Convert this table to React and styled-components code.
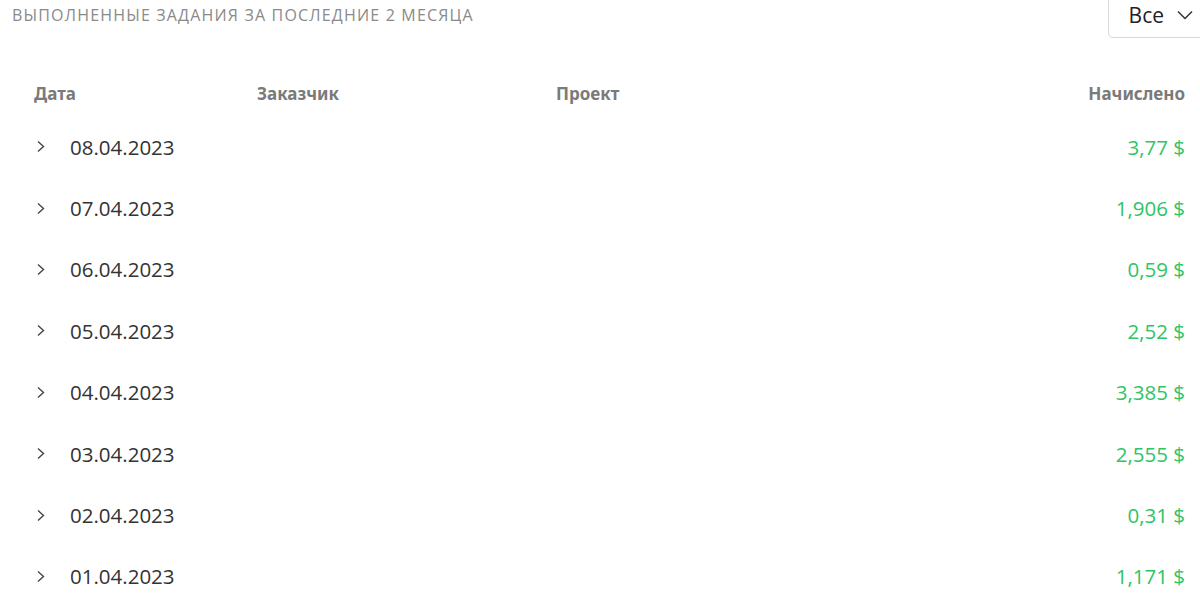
import styled, { createGlobalStyle } from 'styled-components';

const GlobalStyle = createGlobalStyle`
    html, body {
        margin: 0;
        padding: 0;
        background: #ffffff;
        font-family: "Open Sans", "Noto Sans", sans-serif;
    }
`;

const Page = styled.div`
    width: 1200px;
    height: 593px;
    overflow: hidden;
    box-sizing: border-box;
`;

const TopBar = styled.div`
    display: flex;
    justify-content: space-between;
    align-items: flex-start;
    padding-left: 12px;
    height: 70px;
`;

const Title = styled.div`
    margin-top: 4px;
    font-size: 16px;
    letter-spacing: 1.18px;
    color: #8a8a8a;
    text-transform: uppercase;
`;

const Select = styled.button`
    display: flex;
    align-items: center;
    gap: 13px;
    margin-top: -10px;
    margin-right: -22px;
    height: 48px;
    padding: 1px 28px 0 20px;
    background: #fff;
    border: 1px solid #d9d9d9;
    border-radius: 5px;
    font-family: inherit;
    font-size: 21px;
    color: #222;
`;

const Table = styled.div`
    padding: 0 15px 0 34px;
`;

const HeadRow = styled.div`
    display: grid;
    grid-template-columns: 223px 299px 1fr 200px;
    height: 46px;
    align-items: center;
    font-family: "Noto Sans", "Open Sans", sans-serif;
    font-weight: 700;
    font-size: 17px;
    color: #7a7a7a;
`;

const Cell = styled.div`
    text-align: ${p => (p.$right ? 'right' : 'left')};
`;

const Row = styled.div`
    display: grid;
    grid-template-columns: 1fr 200px;
    height: 61.4px;
    align-items: center;
`;

const DateCell = styled.div`
    display: flex;
    align-items: center;
    gap: 21px;
    font-size: 20.5px;
    color: #333;
`;

const Chevron = styled.svg`
    width: 15px;
    height: 15px;
    flex: none;
`;

const Amount = styled.div`
    text-align: right;
    font-size: 20.5px;
    color: #2fc466;
`;

const rows = [
    ['08.04.2023', '3,77'],
    ['07.04.2023', '1,906'],
    ['06.04.2023', '0,59'],
    ['05.04.2023', '2,52'],
    ['04.04.2023', '3,385'],
    ['03.04.2023', '2,555'],
    ['02.04.2023', '0,31'],
    ['01.04.2023', '1,171'],
];

function App() {
    return (
        <Page>
            <GlobalStyle />
            <TopBar>
                <Title>Выполненные задания за последние 2 месяца</Title>
                <Select>
                    Все
                    <svg width="16" height="10" viewBox="0 0 16 10">
                        <path d="M1 1.5 L8 8.5 L15 1.5" fill="none" stroke="#333" strokeWidth="1.5" />
                    </svg>
                </Select>
            </TopBar>
            <Table>
                <HeadRow>
                    <Cell>Дата</Cell>
                    <Cell>Заказчик</Cell>
                    <Cell>Проект</Cell>
                    <Cell $right>Начислено</Cell>
                </HeadRow>
                {rows.map(([date, sum]) => (
                    <Row key={date}>
                        <DateCell>
                            <Chevron viewBox="0 0 15 15">
                                <path d="M4 2.5 L9.5 7.5 L4 12.5" fill="none" stroke="#444" strokeWidth="1.4" />
                            </Chevron>
                            {date}
                        </DateCell>
                        <Amount>{sum} $</Amount>
                    </Row>
                ))}
            </Table>
        </Page>
    );
}

export default App;
